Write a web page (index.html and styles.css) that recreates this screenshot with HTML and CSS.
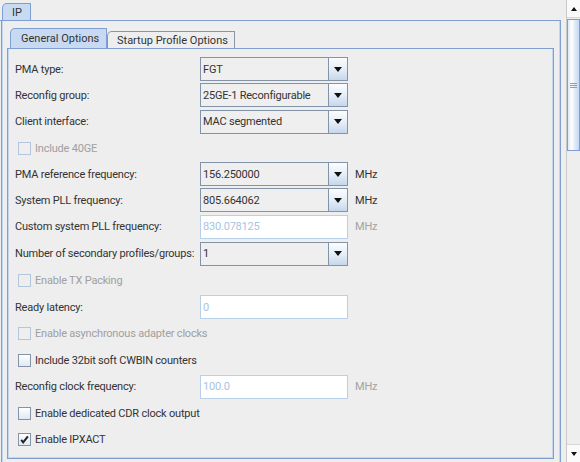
FILE: index.html
```html
<!DOCTYPE html>
<html>
<head>
<meta charset="utf-8">
<link rel="stylesheet" href="styles.css">
</head>
<body>
<div class="main">
  <div class="tabrow outer-tabs">
    <div class="tab selected tab-ip">IP</div>
  </div>
  <div class="outer-panel">
    <div class="tabrow inner-tabs">
      <div class="tab selected tab-general">General Options</div>
      <div class="tab tab-startup">Startup Profile Options</div>
    </div>
    <div class="inner-panel">
      <div class="form">
        <div class="label">PMA type:</div>
        <div class="combo"><div class="combo-text">FGT</div><div class="combo-btn"><span class="arrow-down"></span></div></div>
        <div class="unit"></div>

        <div class="label">Reconfig group:</div>
        <div class="combo"><div class="combo-text">25GE-1 Reconfigurable</div><div class="combo-btn"><span class="arrow-down"></span></div></div>
        <div class="unit"></div>

        <div class="label">Client interface:</div>
        <div class="combo"><div class="combo-text">MAC segmented</div><div class="combo-btn"><span class="arrow-down"></span></div></div>
        <div class="unit"></div>

        <div class="check-row disabled"><span class="checkbox"></span><span>Include 40GE</span></div>

        <div class="label">PMA reference frequency:</div>
        <div class="combo"><div class="combo-text">156.250000</div><div class="combo-btn"><span class="arrow-down"></span></div></div>
        <div class="unit">MHz</div>

        <div class="label">System PLL frequency:</div>
        <div class="combo"><div class="combo-text">805.664062</div><div class="combo-btn"><span class="arrow-down"></span></div></div>
        <div class="unit">MHz</div>

        <div class="label">Custom system PLL frequency:</div>
        <div class="field">830.078125</div>
        <div class="unit disabled-unit">MHz</div>

        <div class="label">Number of secondary profiles/groups:</div>
        <div class="combo"><div class="combo-text">1</div><div class="combo-btn"><span class="arrow-down"></span></div></div>
        <div class="unit"></div>

        <div class="check-row disabled"><span class="checkbox"></span><span>Enable TX Packing</span></div>

        <div class="label">Ready latency:</div>
        <div class="field">0</div>
        <div class="unit"></div>

        <div class="check-row disabled"><span class="checkbox"></span><span>Enable asynchronous adapter clocks</span></div>

        <div class="check-row"><span class="checkbox"></span><span>Include 32bit soft CWBIN counters</span></div>

        <div class="label">Reconfig clock frequency:</div>
        <div class="field">100.0</div>
        <div class="unit disabled-unit">MHz</div>

        <div class="check-row"><span class="checkbox"></span><span>Enable dedicated CDR clock output</span></div>

        <div class="check-row"><span class="checkbox checked"><svg width="11" height="11" viewBox="0 0 11 11"><path d="M2.2 5.8 L4.2 8.4 L8.9 2.3" fill="none" stroke="#222" stroke-width="2"/></svg></span><span>Enable IPXACT</span></div>
      </div>
    </div>
  </div>
</div>
<div class="scrollbar">
  <div class="sb-btn sb-up"><span class="arrow-up"></span></div>
  <div class="sb-thumb"><span class="grip"></span></div>
  <div class="sb-track"></div>
  <div class="sb-btn sb-down"><span class="arrow-down small"></span></div>
</div>
</body>
</html>
```

FILE: styles.css
```css
html, body {
  margin: 0;
  padding: 0;
}
body {
  width: 580px;
  height: 462px;
  overflow: hidden;
  display: flex;
  background: #eeeeee;
  font-family: Roboto, "Liberation Sans", Arial, sans-serif;
  font-size: 11px;
  color: #333333;
}
.main {
  margin-left: 1px;
  width: 560px;
  flex: none;
}
.tabrow {
  display: flex;
  align-items: flex-end;
  border-bottom: 1px solid #7f9fd2;
}
.outer-tabs {
  height: 17px;
  padding-top: 3px;
  padding-left: 2px;
  margin-left: -1px;
}
.tab {
  box-sizing: border-box;
  display: flex;
  align-items: center;
  border: 1px solid #8c96a3;
  border-bottom: none;
  border-top-left-radius: 5px 5px;
  background: #eeeeee;
  color: #333333;
  font-size: 11px;
}
.tab.selected {
  background: #c8daf1;
  border-color: #7f9fd2;
}
.tab-ip {
  width: 29px;
  height: 17px;
  padding-left: 9px;
}
.outer-panel {
  box-sizing: border-box;
  border-left: 1px solid #7f9fd2;
  border-right: 1px solid #7f9fd2;
  box-shadow: inset 1px 0 0 #c3d6ef, inset -1px 0 0 #c3d6ef;
  padding: 7px 6px 0 5px;
  height: 460px;
}
.inner-tabs {
  height: 20px;
  padding-left: 3px;
}
.tab-general {
  width: 97px;
  height: 20px;
  padding-left: 10px;
}
.tab-startup {
  width: 128px;
  height: 17px;
  padding-left: 9px;
}
.inner-panel {
  border-left: 1px solid #7f9fd2;
  border-right: 1px solid #7f9fd2;
  border-bottom: 1px solid #7f9fd2;
  box-shadow: inset 1px 0 0 #c3d6ef, inset -1px 0 0 #c3d6ef, inset 0 -1px 0 #c3d6ef;
  padding: 7px 6px 6px 7px;
}
.form {
  display: grid;
  grid-template-columns: 185px 148px 1fr;
  grid-template-rows: 26px 26px 27px 26px 26px 26px 27px 27px 27px 26px 27px 26px 27px 26px 26px;
  align-items: center;
  letter-spacing: -0.2px;
}
.label {
  white-space: nowrap;
}
.unit {
  padding-left: 7px;
}
.disabled-unit {
  color: #a3a3a3;
}
.combo {
  box-sizing: border-box;
  height: 24px;
  display: flex;
  border: 1px solid #8494a8;
  background: #efefef;
}
.combo-text {
  flex: 1;
  display: flex;
  align-items: center;
  padding-left: 2px;
  white-space: nowrap;
}
.combo-btn {
  width: 18px;
  border-left: 1px solid #8494a8;
  background: linear-gradient(#fbfdff, #e6eef8 50%, #c6d7eb);
  display: flex;
  align-items: center;
  justify-content: center;
}
.arrow-down {
  width: 0;
  height: 0;
  border-left: 4.5px solid transparent;
  border-right: 4.5px solid transparent;
  border-top: 5px solid #111111;
}
.arrow-down.small {
  border-left-width: 3.5px;
  border-right-width: 3.5px;
  border-top-width: 4px;
}
.arrow-up {
  width: 0;
  height: 0;
  border-left: 3.5px solid transparent;
  border-right: 3.5px solid transparent;
  border-bottom: 4px solid #111111;
}
.field {
  box-sizing: border-box;
  height: 24px;
  border: 1px solid #b9d0ea;
  background: #ffffff;
  color: #a9c3e3;
  display: flex;
  align-items: center;
  padding-left: 2px;
}
.check-row {
  grid-column: 1 / -1;
  display: flex;
  align-items: center;
  padding-left: 3px;
  gap: 4px;
}
.check-row.disabled {
  color: #a0a0a0;
}
.checkbox {
  box-sizing: border-box;
  width: 13px;
  height: 13px;
  border: 1px solid #8493a8;
  background: linear-gradient(#ffffff, #dfe8f3);
  display: flex;
  align-items: center;
  justify-content: center;
}
.check-row.disabled .checkbox {
  border-color: #b4c6de;
  background: #eeeeee;
}
.scrollbar {
  margin-left: 5px;
  width: 14px;
  flex: none;
  box-sizing: border-box;
  border-left: 1px solid #c8c8c8;
  display: flex;
  flex-direction: column;
  height: 462px;
}
.sb-btn {
  height: 17px;
  flex: none;
  display: flex;
  align-items: center;
  justify-content: center;
  background: #fafafa;
}
.sb-up {
  border-bottom: 1px solid #d6d6d6;
}
.sb-down {
  border-top: 1px solid #d6d6d6;
}
.sb-thumb {
  margin-top: 1px;
  height: 132px;
  flex: none;
  box-sizing: border-box;
  border: 1px solid #7f9fd2;
  background: linear-gradient(to right, #dce8f7, #ffffff 35%, #e3ecf8 60%, #c5d8f0);
  display: flex;
  align-items: center;
  justify-content: center;
}
.grip {
  width: 7px;
  height: 5px;
  background: repeating-linear-gradient(#7f9fd2 0 1px, transparent 1px 2px);
}
.sb-track {
  flex: 1;
  background: #eeeeee;
}
```
